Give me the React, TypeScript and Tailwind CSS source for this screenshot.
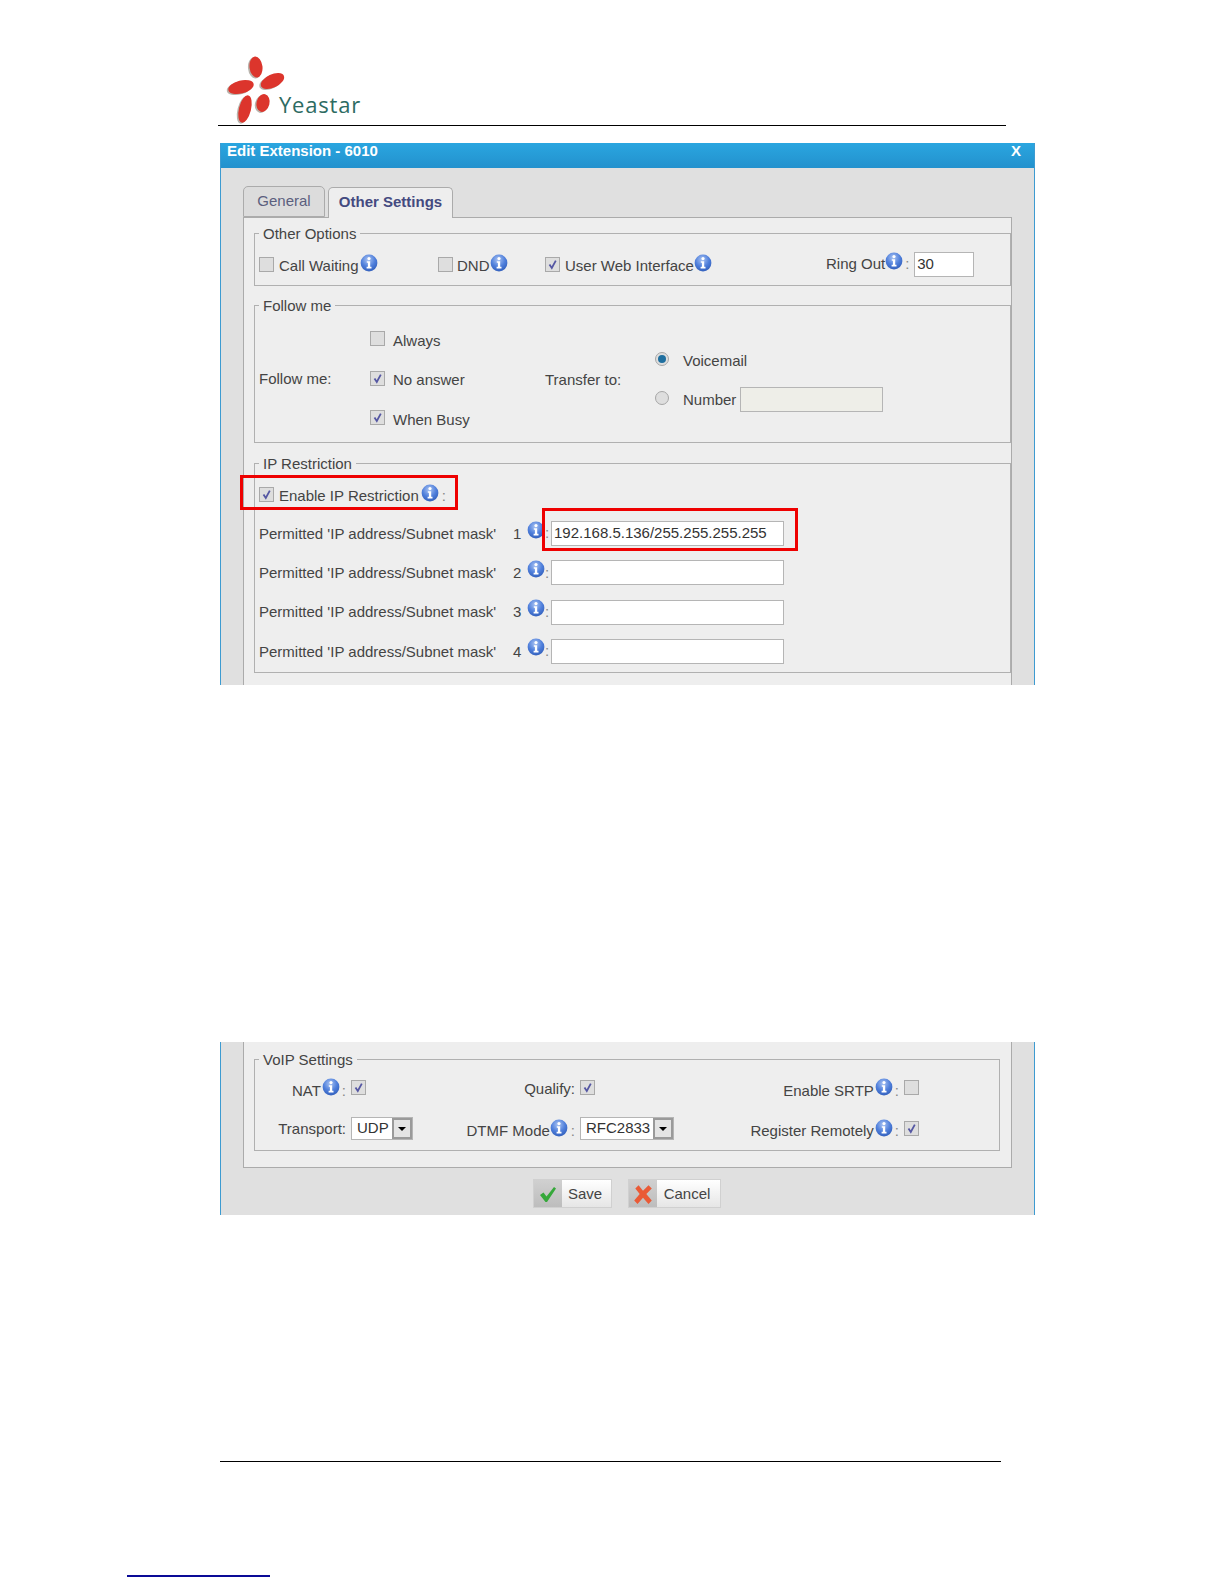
import type { ReactNode } from "react";

function Info({ className = "" }: { className?: string }) {
  return (
    <svg viewBox="0 0 18 18" className={`w-[18px] h-[18px] shrink-0 ${className}`}>
      <defs>
        <radialGradient id="infoFill" cx="45%" cy="30%" r="75%">
          <stop offset="0%" stopColor="#a9c3f2" />
          <stop offset="55%" stopColor="#4f7fdb" />
          <stop offset="100%" stopColor="#2f5cb8" />
        </radialGradient>
      </defs>
      <circle cx="9" cy="9" r="8.4" fill="url(#infoFill)" />
      <circle cx="9" cy="4.6" r="1.6" fill="#fff" />
      <path d="M6.8 7.2h3.4v5.6h1.3v1.6H6.6v-1.6h1.3V8.8H6.8z" fill="#fff" />
    </svg>
  );
}

function Check({ on = false, className = "" }: { on?: boolean; className?: string }) {
  return (
    <span
      className={`w-[15px] h-[15px] shrink-0 border border-[#a9a9a9] bg-[#dedede] flex items-center justify-center ${className}`}
    >
      {on && (
        <svg viewBox="0 0 13 13" className="w-[13px] h-[13px]">
          <path d="M3.5 6.5 L5.8 10 L9.8 2.6" fill="none" stroke="#5557a3" strokeWidth="1.8" />
        </svg>
      )}
    </span>
  );
}

function Radio({ on = false }: { on?: boolean }) {
  return (
    <span className="w-[14px] h-[14px] mb-[2px] shrink-0 rounded-full border border-[#a6a6a6] bg-[#dedede] flex items-center justify-center">
      {on && <span className="w-[8px] h-[8px] rounded-full bg-[#1f6f9f]" />}
    </span>
  );
}

function TextBox({ value = "", className = "" }: { value?: string; className?: string }) {
  return (
    <div className={`h-[25px] border border-[#b5b5b5] bg-white pl-[2px] flex items-center text-[#333] ${className}`}>
      {value}
    </div>
  );
}

function Group({ title, className = "", children }: { title: string; className?: string; children: ReactNode }) {
  return (
    <fieldset className={`relative border border-[#b0b0b0] ${className}`}>
      <legend className="ml-[4px] px-[4px] h-[16px] leading-[18px] text-[#444]">{title}</legend>
      {children}
    </fieldset>
  );
}

function Select({ value, className = "" }: { value: string; className?: string }) {
  return (
    <div className={`h-[23px] border border-[#b5b5b5] bg-white flex items-center justify-between text-[#333] ${className}`}>
      <span className="pl-[5px]">{value}</span>
      <span className="w-[20px] h-full border-[2px] border-[#9a9a9a] bg-[#e4e4e4] flex items-center justify-center">
        <span className="w-0 h-0 border-x-[4px] border-x-transparent border-t-[4px] border-t-black" />
      </span>
    </div>
  );
}

function PermittedRow({ n, value }: { n: number; value?: string }) {
  return (
    <div className="flex items-center h-[25px]">
      <span className="w-[254px] mt-[1px]">Permitted 'IP address/Subnet mask'</span>
      <span className="w-[14px] mt-[1px]">{n}</span>
      <Info className="mb-[8px]" />
      <span className="w-[6px] text-[#888]">:</span>
      <TextBox value={value} className="w-[233px]" />
    </div>
  );
}

function ActionButton({ label, icon, className = "" }: { label: string; icon: ReactNode; className?: string }) {
  return (
    <div className={`h-[29px] flex border border-[#d0d0d0] bg-gradient-to-b from-white to-[#e6e6e6] ${className}`}>
      <span className="w-[28px] bg-gradient-to-b from-[#d0d0d0] to-[#bdbdbd] flex items-center justify-center">{icon}</span>
      <span className="flex-1 text-center pr-[2px] leading-[28px] text-[#444]">{label}</span>
    </div>
  );
}

export default function App() {
  return (
    <div className="w-[1224px] h-[1584px] overflow-hidden bg-white text-[15px] text-[#444] font-['Liberation_Sans',Arial,sans-serif]">
      {/* Page header with logo */}
      <div className="ml-[218px] w-[788px] h-[126px] pt-[51px] border-b border-black">
        <svg viewBox="0 0 150 75" className="w-[150px] h-[75px]">
          <g fill="#b9b4ad" transform="translate(-1.5 1)">
            <ellipse cx="38" cy="16" rx="6.5" ry="10.5" transform="rotate(-6 38 16)" />
            <ellipse cx="54.5" cy="30" rx="12.5" ry="6.5" transform="rotate(-25 54.5 30)" />
            <ellipse cx="23" cy="36" rx="13" ry="6.5" transform="rotate(-14 23 36)" />
            <ellipse cx="27" cy="58" rx="6" ry="14" transform="rotate(14 27 58)" />
            <ellipse cx="45" cy="52" rx="6.5" ry="9" transform="rotate(14 45 52)" />
          </g>
          <g fill="#dc352c">
            <ellipse cx="38" cy="16" rx="6.5" ry="10.5" transform="rotate(-6 38 16)" />
            <ellipse cx="54.5" cy="30" rx="12.5" ry="6.5" transform="rotate(-25 54.5 30)" />
            <ellipse cx="23" cy="36" rx="13" ry="6.5" transform="rotate(-14 23 36)" />
            <ellipse cx="27" cy="58" rx="6" ry="14" transform="rotate(14 27 58)" />
            <ellipse cx="45" cy="52" rx="6.5" ry="9" transform="rotate(14 45 52)" />
          </g>
          <text x="61" y="62" fill="#2d6b62" fontSize="22" letterSpacing="0.8" fontFamily="'Open Sans', sans-serif">
            Yeastar
          </text>
        </svg>
      </div>

      {/* First dialog crop */}
      <div className="ml-[220px] mt-[17px] w-[815px] h-[542px] overflow-hidden border-x border-[#3d9bd1] bg-[#e0e0e0] flex flex-col">
        <div className="h-[25px] shrink-0 bg-gradient-to-b from-[#2aa6e0] to-[#2391cd] flex justify-between pl-[6px] pr-[13px] text-white font-bold text-[15px] leading-[16px]">
          <span>Edit Extension - 6010</span>
          <span>X</span>
        </div>

        <div className="ml-[22px] mt-[18px] flex items-end gap-[3px] h-[31px] shrink-0">
          <div className="w-[82px] h-[31px] rounded-t-[5px] border border-[#ababab] bg-[#dcdcdc] text-center leading-[28px] text-[#5b5f7e]">
            General
          </div>
          <div className="w-[125px] h-[31px] -mb-[1px] z-10 rounded-t-[5px] border border-b-0 border-[#ababab] bg-[#eeeeee] text-center leading-[27px] font-bold text-[#444a80]">
            Other Settings
          </div>
        </div>

        <div className="ml-[22px] w-[769px] flex-1 border border-b-0 border-[#ababab] bg-[#eeeeee] pl-[10px] pt-[7px] flex flex-col gap-[11px]">
          <Group title="Other Options" className="h-[61px] shrink-0">
            <div className="flex items-center h-[25px] mt-[11px] pl-[4px]">
              <div className="w-[179px] flex items-center">
                <Check />
                <span className="ml-[5px] mt-[4px]">Call Waiting</span>
                <Info className="ml-[2px] mb-[3px]" />
              </div>
              <div className="w-[107px] flex items-center">
                <Check />
                <span className="ml-[4px] mt-[4px]">DND</span>
                <Info className="mb-[3px]" />
              </div>
              <div className="w-[281px] flex items-center">
                <Check on />
                <span className="ml-[5px] mt-[4px]">User Web Interface</span>
                <Info className="mb-[3px]" />
              </div>
              <div className="flex items-center">
                <span className="mb-[1px]">Ring Out</span>
                <Info className="mb-[7px]" />
                <span className="w-[11px] pl-[2px] text-[#888]">:</span>
                <TextBox value="30" className="w-[60px]" />
              </div>
            </div>
          </Group>

          <Group title="Follow me" className="h-[146px] shrink-0">
            <div className="flex items-center h-[129px] pl-[4px]">
              <span className="w-[111px] mt-[4px]">Follow me:</span>
              <div className="w-[175px] flex flex-col gap-[24.5px] mt-[1px]">
                <div className="flex items-center h-[15px]">
                  <Check />
                  <span className="ml-[8px] mt-[5px]">Always</span>
                </div>
                <div className="flex items-center h-[15px]">
                  <Check on />
                  <span className="ml-[8px] mt-[4px]">No answer</span>
                </div>
                <div className="flex items-center h-[15px]">
                  <Check on />
                  <span className="ml-[8px] mt-[5px]">When Busy</span>
                </div>
              </div>
              <span className="w-[110px] mt-[6px]">Transfer to:</span>
              <div className="flex flex-col gap-[14px] mt-[3px]">
                <div className="flex items-center h-[25px]">
                  <Radio on />
                  <span className="ml-[14px] mt-[3px]">Voicemail</span>
                </div>
                <div className="flex items-center h-[25px]">
                  <Radio />
                  <span className="ml-[14px] mt-[3px] mr-[4px]">Number</span>
                  <div className="w-[143px] h-[25px] mt-[1px] border border-[#b5b5b5] bg-[#eeeee8]" />
                </div>
              </div>
            </div>
          </Group>

          <Group title="IP Restriction" className="h-[218px] mt-[1px] shrink-0">
            <div className="flex items-center h-[24px] mt-[11px] pl-[4px]">
              <Check on />
              <span className="ml-[5px] mt-[4px]">Enable IP Restriction</span>
              <Info className="ml-[2px] mb-[3px]" />
              <span className="ml-[3px] mt-[4px] text-[#888]">:</span>
            </div>
            <div className="flex flex-col gap-[14.3px] mt-[15px] pl-[4px]">
              <PermittedRow n={1} value="192.168.5.136/255.255.255.255" />
              <PermittedRow n={2} />
              <PermittedRow n={3} />
              <PermittedRow n={4} />
            </div>
            {/* Red highlight boxes */}
            <div className="absolute left-[-15px] top-[4px] w-[218px] h-[35px] border-[3px] border-[#ee0000]" />
            <div className="absolute left-[287px] top-[37px] w-[256px] h-[43px] border-[3px] border-[#ee0000]" />
          </Group>
        </div>
      </div>

      {/* Second dialog crop */}
      <div className="ml-[220px] mt-[357px] w-[815px] h-[173px] overflow-hidden border-x border-[#3d9bd1] bg-[#e0e0e0]">
        <div className="ml-[22px] w-[769px] h-[126px] border border-t-0 border-[#ababab] bg-[#eeeeee] pl-[10px] pt-[9px]">
          <Group title="VoIP Settings" className="h-[100px] w-[746px]">
            <div className="grid grid-cols-[96px_89px_140px_120px_204px_auto] gap-y-[18px] items-center mt-[9px]">
              <div className="flex items-center justify-end pr-[5px] h-[23px]">
                <span className="mt-[8px]">NAT</span>
                <Info className="ml-[1px] mb-[1px]" />
                <span className="ml-[2px] mt-[8px] text-[#888]">:</span>
              </div>
              <div className="flex items-center">
                <Check on />
              </div>
              <div className="flex items-center justify-end pr-[5px] h-[23px]">
                <span className="mt-[4px]">Qualify:</span>
              </div>
              <div className="flex items-center">
                <Check on />
              </div>
              <div className="flex items-center justify-end pr-[5px] h-[23px]">
                <span className="mt-[8px]">Enable SRTP</span>
                <Info className="ml-[1px] mb-[1px]" />
                <span className="ml-[2px] mt-[8px] text-[#888]">:</span>
              </div>
              <div className="flex items-center">
                <Check />
              </div>

              <div className="flex items-center justify-end pr-[5px] h-[23px]">
                <span className="mt-[2px]">Transport:</span>
              </div>
              <div>
                <Select value="UDP" className="w-[62px]" />
              </div>
              <div className="flex items-center justify-end pr-[5px] h-[23px]">
                <span className="mt-[6px]">DTMF Mode</span>
                <Info className="mb-[2px]" />
                <span className="ml-[3px] mt-[6px] text-[#888]">:</span>
              </div>
              <div>
                <Select value="RFC2833" className="w-[94px]" />
              </div>
              <div className="flex items-center justify-end pr-[5px] h-[23px]">
                <span className="mt-[6px]">Register Remotely</span>
                <Info className="ml-[1px] mb-[2px]" />
                <span className="ml-[2px] mt-[6px] text-[#888]">:</span>
              </div>
              <div className="flex items-center">
                <Check on />
              </div>
            </div>
          </Group>
        </div>
        <div className="mt-[11px] pr-[2px] flex justify-center gap-[16px]">
          <ActionButton
            label="Save"
            className="w-[79px]"
            icon={
              <svg viewBox="0 0 20 20" className="w-[20px] h-[20px]">
                <path d="M2 11 L5.5 8.5 L8.5 12.5 L16 3 L18 4.5 L9 18 L7.5 18 Z" fill="#35a83a" />
              </svg>
            }
          />
          <ActionButton
            label="Cancel"
            className="w-[93px]"
            icon={
              <svg viewBox="0 0 20 20" className="w-[22px] h-[22px]">
                <path d="M3 5 L6 2 L10 7 L15 2 L18 5 L13 10 L18 16 L15 19 L10 13.5 L5 19 L2 16 L7 10 Z" fill="#ea5a36" />
              </svg>
            }
          />
        </div>
      </div>

      {/* Page footer */}
      <div className="ml-[220px] mt-[246px] w-[781px] h-[1px] bg-black" />
      <div className="ml-[127px] mt-[113px] w-[143px] h-[2px] bg-[#0a0a96]" />
    </div>
  );
}
